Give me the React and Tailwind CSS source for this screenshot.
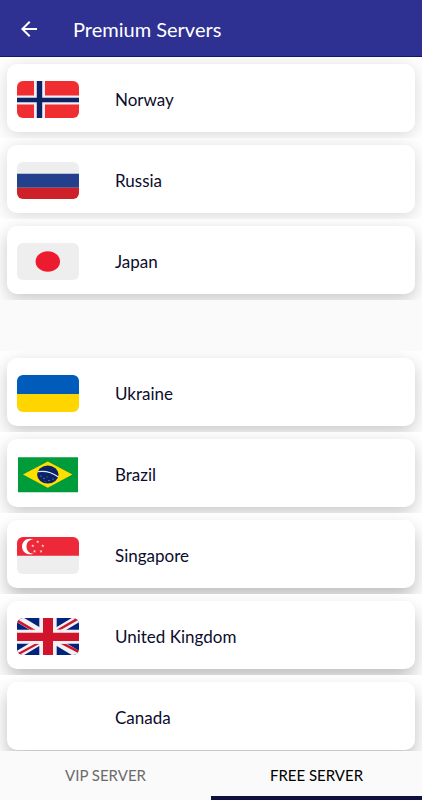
import React, { useState } from "react";
import { MdArrowBack } from "react-icons/md";

const Flag = ({ children, rounded = true }) => (
  <svg
    viewBox="0 0 62 37"
    aria-hidden="true"
    className={rounded ? "w-full h-full rounded-md" : "w-full h-full"}
  >
    {children}
  </svg>
);

const Norway = () => (
  <Flag>
    <path fill="#f02d30" d="M0 0h62v37H0z" />
    <path fill="#f1eef3" d="M17 0h11v37H17zM0 14.5h62v9H0z" />
    <path fill="#0b2265" d="M19.8 0h5.4v37h-5.4zM0 16.8h62v4.4H0z" />
  </Flag>
);

const Russia = () => (
  <Flag>
    <path fill="#eeeeee" d="M0 0h62v12H0z" />
    <path fill="#22408c" d="M0 11.7h62v14H0z" />
    <path fill="#ce2028" d="M0 25.7h62V37H0z" />
  </Flag>
);

const Japan = () => (
  <Flag>
    <path fill="#eeeeee" d="M0 0h62v37H0z" />
    <ellipse cx="30.8" cy="18.5" rx="12.2" ry="10.3" fill="#ed1b2f" />
  </Flag>
);

const Ukraine = () => (
  <Flag>
    <path fill="#005bbb" d="M0 0h62v19H0z" />
    <path fill="#ffd500" d="M0 19h62v18H0z" />
  </Flag>
);

const Brazil = () => (
  <Flag rounded={false}>
    <path fill="#009b3a" d="M1 1.2h60v35H1z" />
    <path fill="#fedf00" d="M6 18.6L30.8 5.4l24.6 13.2-24.6 13.2z" />
    <ellipse cx="30.8" cy="18.6" rx="10.7" ry="9" fill="#0a2266" />
    <path
      fill="none"
      stroke="#dfe8ee"
      strokeWidth="1.2"
      d="M21 15.6c7-1 14.5 1 20 5.2"
    />
    <g fill="#c4cfe0">
      <circle cx="24" cy="20" r=".5" />
      <circle cx="27" cy="22.5" r=".5" />
      <circle cx="30" cy="21" r=".4" />
      <circle cx="32" cy="24.5" r=".5" />
      <circle cx="36" cy="23" r=".5" />
      <circle cx="28" cy="25.3" r=".4" />
    </g>
  </Flag>
);

const singaporeStars = [
  [20.7, 4.8],
  [15.8, 8.8],
  [25.8, 8.8],
  [17.5, 14.3],
  [24, 14.3],
];

const Singapore = () => (
  <Flag>
    <path fill="#ed2939" d="M0 0h62v19H0z" />
    <path fill="#eeeeee" d="M0 18.7h62V37H0z" />
    <path
      fill="#fff"
      d="M16.5 2.2C10 .2 5 4 5 9.5s5 9.3 11.5 7.3C12 16.5 9.5 13.5 9.5 9.5s2.5-7 7-7.3z"
    />
    {singaporeStars.map(([x, y]) => (
      <path
        key={`${x}-${y}`}
        fill="#fbd5da"
        transform={`translate(${x} ${y})`}
        d="M0-1.6l.45 1.1h1.15l-.9.7.35 1.2L0 .7l-1.05.7.35-1.2-.9-.7h1.15z"
      />
    ))}
  </Flag>
);

const UnitedKingdom = () => (
  <Flag>
    <path fill="#00247d" d="M0 0h62v37H0z" />
    <path stroke="#f2f0f2" strokeWidth="7.4" d="M0 0l62 37M62 0L0 37" />
    <path
      fill="#cf142b"
      d="M0 1v3L13.500 12h5zM62 0h-2.500L39.500 11.700H44L62 1.500zM2 37L22.500 25.700H18L0 35.500V37zM62 35.500v-3L49 25.700h-5.500z"
    />
    <path fill="#f2f0f2" d="M22.300 0h17.400v37H22.300zM0 11.700h62v14H0z" />
    <path fill="#cf142b" d="M26 0h10v37H26zM0 14.700h62V23H0z" />
  </Flag>
);

// The shadow gets heavier further down the list
const SHADOWS = {
  light: "shadow-[0_3px_18px_rgba(0,0,0,0.16)]",
  medium: "shadow-[0_6px_18px_rgba(0,0,0,0.22)]",
  strong: "shadow-[0_9px_18px_rgba(0,0,0,0.26)]",
};

const topServers = [
  { name: "Norway", flag: Norway, shadow: "light" },
  { name: "Russia", flag: Russia, shadow: "light" },
  { name: "Japan", flag: Japan, shadow: "medium" },
];

const moreServers = [
  { name: "Ukraine", flag: Ukraine, shadow: "medium" },
  { name: "Brazil", flag: Brazil, shadow: "medium" },
  { name: "Singapore", flag: Singapore, shadow: "strong" },
  { name: "United Kingdom", flag: UnitedKingdom, shadow: "strong" },
  { name: "Canada", flag: null, shadow: "strong" },
];

const tabs = ["VIP SERVER", "FREE SERVER"];

const ServerList = ({ servers }) => (
  <ul>
    {servers.map(({ name, flag: FlagIcon, shadow }) => (
      <li key={name} className="overflow-hidden bg-white px-[7px] pt-[7px] pb-[6px]">
        <button
          type="button"
          className={`flex w-full h-[68px] items-center rounded-[10px] bg-white pl-[10px] pt-[3px] text-left ${SHADOWS[shadow]}`}
        >
          <span className="w-[62px] h-[37px] shrink-0">{FlagIcon && <FlagIcon />}</span>
          <span className="ml-9 text-[17px] leading-6 text-[#0c0c2c]">{name}</span>
        </button>
      </li>
    ))}
  </ul>
);

const App = () => {
  const [activeTab, setActiveTab] = useState("FREE SERVER");

  return (
    <div className="flex h-screen flex-col bg-[#fafafa] font-['Lato',sans-serif]">
      {/* Header */}
      <header className="flex h-[57px] shrink-0 items-center gap-8 border-b border-[#15156e] bg-[#2e3192] pl-[17px] pt-[2px] text-white">
        <button type="button" aria-label="Back">
          <MdArrowBack size={24} />
        </button>
        <h1 className="text-xl">Premium Servers</h1>
      </header>

      {/* Servers */}
      <main className="flex min-h-0 flex-1 flex-col gap-[51px] overflow-y-auto [scrollbar-width:none]">
        <ServerList servers={topServers} />
        <ServerList servers={moreServers} />
      </main>

      {/* Tabs */}
      <div role="tablist" className="flex h-[49px] shrink-0 bg-[#fafafa]">
        {tabs.map((tab) => (
          <button
            key={tab}
            type="button"
            role="tab"
            aria-selected={activeTab === tab}
            onClick={() => setActiveTab(tab)}
            className={`flex-1 border-y-4 border-t-transparent text-[15px] ${
              activeTab === tab
                ? "border-b-[#10103f] text-black"
                : "border-b-transparent text-[#6b6b6b]"
            }`}
          >
            {tab}
          </button>
        ))}
      </div>
    </div>
  );
};

export default App;
